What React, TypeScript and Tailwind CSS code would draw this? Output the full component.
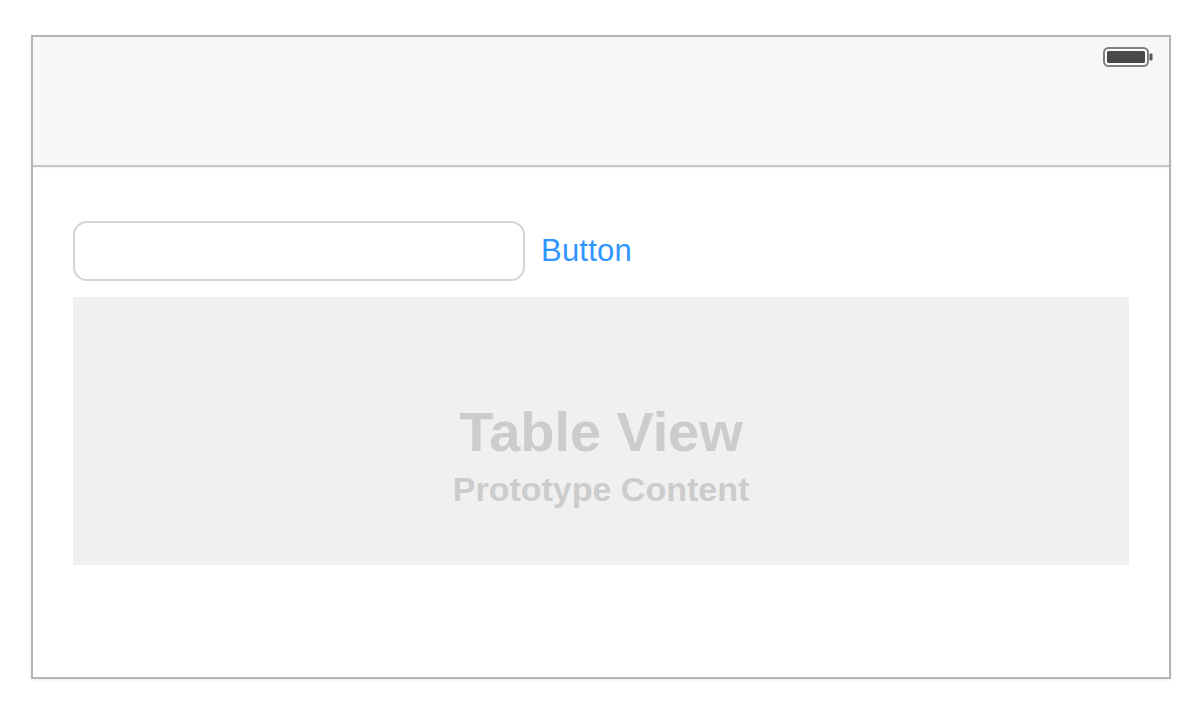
import React from 'react';

const sans = { fontFamily: '"Liberation Sans", Arial, sans-serif' };

const Battery: React.FC = () => (
  <svg width="50" height="20" viewBox="0 0 50 20" className="block">
    <rect x="1" y="1" width="44" height="18" rx="4.5" fill="#fafafa" stroke="#808080" strokeWidth="2" />
    <rect x="4" y="4" width="38" height="12" rx="1.5" fill="#4a4a4a" />
    <rect x="46.5" y="6.5" width="3" height="7" rx="1" fill="#555555" />
  </svg>
);

const App: React.FC = () => {
  return (
    <div className="w-[1204px] h-[712px] bg-white pt-[35px] pl-[31px]" style={sans}>
      <div className="w-[1140px] h-[644px] border-2 border-[#b5b5b5] bg-white flex flex-col shadow-[0_1px_3px_rgba(0,0,0,0.08)]">
        <div className="h-[130px] bg-[#f7f7f7] border-b-2 border-[#c6c6c6] flex justify-end pt-[10px] pr-[16px] shadow-[0_1px_1px_rgba(0,0,0,0.05)]">
          <Battery />
        </div>
        <div className="flex-1 pl-[40px] pt-[54px]">
          <div className="flex items-center h-[60px]">
            <div className="w-[452px] h-[60px] bg-white border-2 border-[#d6d6d6] rounded-[14px]"></div>
            <span className="ml-[16px] -mt-[1px] text-[31px] tracking-[0.2px] text-[#3195ff] leading-none">Button</span>
          </div>
          <div className="mt-[16px] w-[1056px] h-[268px] bg-[#f0f0f0] flex flex-col items-center pt-[103px] text-[#cccccc] font-bold">
            <span className="text-[56px] tracking-[-0.1px] leading-[64px]">Table View</span>
            <span className="text-[34px] leading-[40px] mt-[5px]">Prototype Content</span>
          </div>
        </div>
      </div>
    </div>
  );
};

export default App;
